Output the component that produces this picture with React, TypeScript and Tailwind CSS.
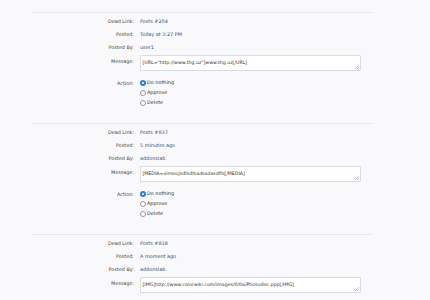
import React from "react";

type Item = { link: string; posted: string; by: string; msg: string };

const items: Item[] = [
  { link: "Posts #204", posted: "Today at 3:27 PM", by: "user1", msg: '[URL="http://www.thg.uz"]www.thg.uz[/URL]' },
  { link: "Posts #837", posted: "5 minutes ago", by: "addonslab", msg: "[MEDIA=vimeo]sdfsdfsadsadasdffs[/MEDIA]" },
  { link: "Posts #838", posted: "A moment ago", by: "addonslab", msg: "[IMG]http://www.colorwiki.com/images/0/0a/Photodisc.ppp[/IMG]" },
];

function Row({ label, children }: { label: string; children: React.ReactNode }) {
  return (
    <div className="flex h-[13px] items-center">
      <div className="w-[102px] shrink-0 text-right text-[#444]">{label}</div>
      <div className="pl-[6px] text-[#2d4f7c]">{children}</div>
    </div>
  );
}

function Radio({ checked, label }: { checked?: boolean; label: string }) {
  return (
    <div className="flex h-[10px] items-center gap-[1px]">
      {checked ? (
        <span className="flex h-[6px] w-[6px] items-center justify-center rounded-full bg-[#2f7ee0]">
          <span className="h-[2px] w-[2px] rounded-full bg-white" />
        </span>
      ) : (
        <span className="h-[6px] w-[6px] rounded-full border-[0.6px] border-[#9a9a9a] bg-white" />
      )}
      <span className="text-[#333]">{label}</span>
    </div>
  );
}

function Section({ item }: { item: Item }) {
  return (
    <div className="ml-[32px] w-[340px] border-t border-[#e6e9f0] pt-[2px] pb-[15px]">
      <Row label="Dead Link:">{item.link}</Row>
      <Row label="Posted:">{item.posted}</Row>
      <Row label="Posted By:">{item.by}</Row>
      <div className="mt-[1px] flex">
        <div className="w-[102px] shrink-0 pt-[2.5px] text-right text-[#444]">Message:</div>
        <div className="relative ml-[6px] h-[16px] w-[221px] overflow-hidden whitespace-nowrap rounded-[1px] border border-[#d9dce2] bg-white px-[1.5px] pt-[2.5px] text-[4.7px] text-[#333]">
          {item.msg}
          <svg className="absolute right-[1px] bottom-[1px]" width="4" height="4" viewBox="0 0 4 4">
            <path d="M4 0 L0 4 M4 2 L2 4" stroke="#999" strokeWidth="0.6" />
          </svg>
        </div>
      </div>
      <div className="mt-[7px] flex">
        <div className="h-[10px] w-[102px] shrink-0 text-right leading-[10px] text-[#444]">Action:</div>
        <div className="pl-[6px]">
          <Radio checked label="Do nothing" />
          <Radio label="Approve" />
          <Radio label="Delete" />
        </div>
      </div>
    </div>
  );
}

export default function App() {
  return (
    <div
      className="min-h-[300px] w-[430px] bg-[#f9f9fc] pt-[12px] text-[4.9px]"
      style={{ fontFamily: '"DejaVu Sans", Verdana, sans-serif' }}
    >
      {items.map((it, i) => (
        <Section key={i} item={it} />
      ))}
    </div>
  );
}
